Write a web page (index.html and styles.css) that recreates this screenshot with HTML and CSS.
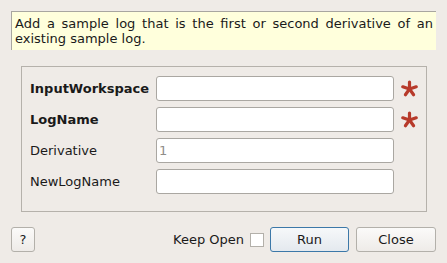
FILE: index.html
```html
<!DOCTYPE html>
<html>
<head>
<meta charset="utf-8">
<link rel="stylesheet" href="styles.css">
</head>
<body>
<div class="dialog">
  <div class="info">Add a sample log that is the first or second derivative of an existing sample log.</div>
  <div class="group">
    <div class="row">
      <label class="lbl bold">InputWorkspace</label>
      <div class="field"></div>
      <span class="star"><svg width="17" height="17" viewBox="0 0 17 17"><g stroke="#b73a2b" stroke-width="3.2" stroke-linecap="round"><line x1="8.5" y1="9" x2="8.5" y2="2"/><line x1="8.5" y1="9" x2="1.8" y2="6.8"/><line x1="8.5" y1="9" x2="15.2" y2="6.8"/><line x1="8.5" y1="9" x2="4.4" y2="14.7"/><line x1="8.5" y1="9" x2="12.6" y2="14.7"/></g></svg></span>
    </div>
    <div class="row">
      <label class="lbl bold">LogName</label>
      <div class="field"></div>
      <span class="star"><svg width="17" height="17" viewBox="0 0 17 17"><g stroke="#b73a2b" stroke-width="3.2" stroke-linecap="round"><line x1="8.5" y1="9" x2="8.5" y2="2"/><line x1="8.5" y1="9" x2="1.8" y2="6.8"/><line x1="8.5" y1="9" x2="15.2" y2="6.8"/><line x1="8.5" y1="9" x2="4.4" y2="14.7"/><line x1="8.5" y1="9" x2="12.6" y2="14.7"/></g></svg></span>
    </div>
    <div class="row">
      <label class="lbl">Derivative</label>
      <div class="field"><span class="ph">1</span></div>
      <span class="star"></span>
    </div>
    <div class="row">
      <label class="lbl">NewLogName</label>
      <div class="field"></div>
      <span class="star"></span>
    </div>
  </div>
  <div class="buttons">
    <button class="btn help">?</button>
    <div class="spacer"></div>
    <span class="keep">Keep Open</span>
    <span class="check"></span>
    <button class="btn run">Run</button>
    <button class="btn close">Close</button>
  </div>
</div>
</body>
</html>
```
FILE: styles.css
```css
html, body {
  margin: 0;
  padding: 0;
  background: #efebe7;
}
body {
  font-family: "DejaVu Sans", sans-serif;
  font-size: 13px;
  color: #1a1a1a;
  width: 447px;
  height: 263px;
  overflow: hidden;
}
.dialog {
  padding: 11px 11px 0 11px;
  display: flex;
  flex-direction: column;
}
.info {
  background: #ffffdc;
  border-top: 1px solid #a8a6a0;
  border-left: 1px solid #a8a6a0;
  height: 39px;
  box-sizing: border-box;
  padding: 4px 3px 0 3px;
  line-height: 15px;
  text-align: justify;
  text-align-last: left;
}
.group {
  margin: 16px 9px 0 10px;
  border: 1px solid #b5b1ab;
  height: 146px;
  box-sizing: border-box;
  padding: 9px 0 0 8px;
  display: flex;
  flex-direction: column;
  gap: 6px;
}
.row {
  display: flex;
  align-items: center;
  height: 25px;
}
.lbl {
  width: 126px;
  flex: none;
}
.bold {
  font-weight: bold;
}
.field {
  width: 238px;
  height: 25px;
  box-sizing: border-box;
  border: 1px solid #aaa7a2;
  border-radius: 3px;
  background: #ffffff;
  display: flex;
  align-items: center;
  padding-left: 2px;
}
.ph {
  color: #8f8d89;
}
.star {
  width: 17px;
  height: 17px;
  margin-left: 7px;
  display: flex;
}
.buttons {
  margin-top: 15px;
  display: flex;
  align-items: center;
  height: 25px;
}
.spacer {
  flex: 1;
}
.btn {
  font-family: "DejaVu Sans", sans-serif;
  font-size: 13px;
  color: #1a1a1a;
  height: 25px;
  box-sizing: border-box;
  border: 1px solid #b3b0aa;
  border-radius: 3px;
  background: linear-gradient(#fbfaf9, #eeebe8);
  padding: 0;
}
.help {
  width: 24px;
}
.keep {
  margin-right: 6px;
}
.check {
  width: 14px;
  height: 14px;
  box-sizing: border-box;
  border: 1px solid #b3b0aa;
  background: #fff;
  margin-right: 6px;
}
.run {
  width: 79px;
  border-color: #3c78a8;
  background: linear-gradient(#f6f8fa, #e4e9ee);
}
.close {
  width: 80px;
  margin-left: 7px;
}
```
